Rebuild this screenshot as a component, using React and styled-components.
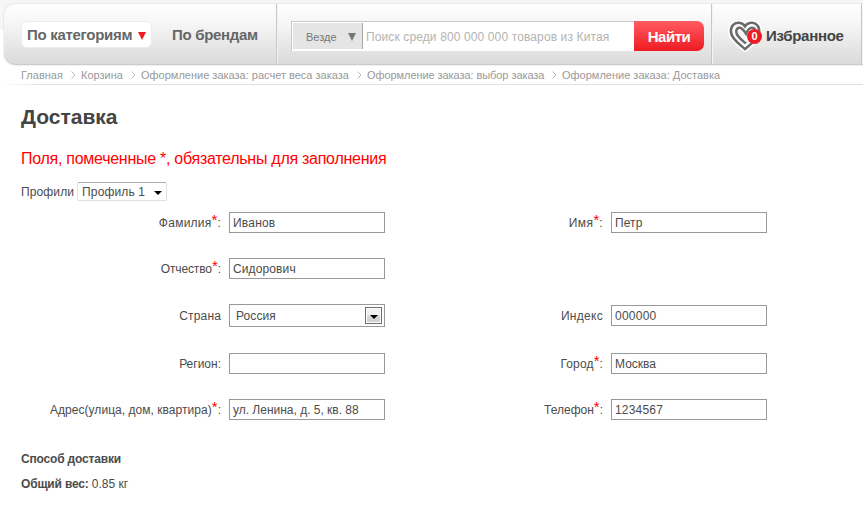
import React from "react";
import styled, { createGlobalStyle, css } from "styled-components";

const Global = createGlobalStyle`
  * { box-sizing: border-box; }
  body { margin: 0; background: #fff; color: #4b4b4b; overflow: hidden;
    font: 12px/16px "Liberation Sans", Arial, sans-serif; }
`;

const Page = styled.div`
  width: 863px;
  height: 506px;
  overflow: hidden;
  padding: 4px 0 0 4px;
  background: linear-gradient(#f6f6f6, #f6f6f6) 0 0 / 100% 30px no-repeat #fff;
`;

const Header = styled.header`
  display: flex;
  width: 859px;
  height: 61px;
  border-radius: 12px 0 0 12px;
  background: linear-gradient(#ffffff 0%, #f5f5f5 35%, #dadada 100%);
  border-bottom: 1px solid #cbcbcb;
  box-shadow: 0 0 2px rgba(0, 0, 0, 0.2);
`;

const HeaderCell = styled.div`
  display: flex;
  flex: none;
  width: ${(p) => p.$width}px;
  padding: ${(p) => p.$padding};
  border-right: 1px solid #c6c6c6;
  box-shadow: 1px 0 0 #f4f4f4;
`;

const navText = css`
  font-weight: bold;
  font-size: 15px;
  line-height: 26px;
  letter-spacing: -0.3px;
  color: #666;
  white-space: nowrap;
`;

const CategoryButton = styled.div`
  ${navText}
  display: flex;
  align-items: center;
  width: 131px;
  height: 27px;
  padding-left: 5px;
  border: 1px solid #ececec;
  border-radius: 6px;
  background: #fff;
`;

const NavLink = styled.div`
  ${navText}
  margin-left: 20px;
  padding-top: 1px;
`;

const RedArrow = styled.svg`
  display: block;
  width: 8px;
  height: 8px;
  margin: 2px 0 0 6px;
`;

const Search = styled.div`
  display: flex;
  width: 343px;
  height: 30px;
  background: #fff;
  border: solid #c9c9c9;
  border-width: 1px 0 0 1px;
`;

const Scope = styled.div`
  display: flex;
  align-items: center;
  width: 70px;
  height: 26px;
  margin: 1px 0 0 1px;
  padding: 1px 6px 0 13px;
  justify-content: space-between;
  background: #e5e5e5;
  border-right: 1px solid #a6a6a6;
  color: #777;
  font-size: 11px;
`;

const ScopeArrow = styled.svg`
  display: block;
  width: 8px;
  height: 8px;
`;

const Placeholder = styled.div`
  flex: 1;
  padding-left: 3px;
  line-height: 30px;
  color: #b3b3b3;
  font-size: 12px;
  letter-spacing: 0.12px;
  white-space: nowrap;
`;

const SearchButton = styled.div`
  width: 70px;
  height: 30px;
  border-radius: 0 7px 7px 0;
  background: linear-gradient(#ff5b61, #ee1b22);
  color: #fff;
  font-weight: bold;
  font-size: 15px;
  line-height: 32px;
  letter-spacing: -0.5px;
  text-align: center;
`;

const HeartBox = styled.div`
  position: relative;
  width: 36px;
  height: 34px;
  svg { display: block; }
`;

const Badge = styled.span`
  position: absolute;
  left: 19px;
  top: 10px;
  width: 15px;
  height: 15px;
  border-radius: 50%;
  background: #ed1c24;
  color: #fff;
  font: bold 11px/15px "Liberation Sans", Arial, sans-serif;
  text-align: center;
`;

const Favorites = styled.div`
  ${navText}
  color: #444;
  margin: 4px 0 0 2px;
`;

const Crumbs = styled.nav`
  display: flex;
  align-items: center;
  height: 20px;
  padding-left: 17px;
  color: #999;
  font-size: 11px;
  border-bottom: 1px solid;
  border-image: linear-gradient(90deg, #fff, #e0e0e0 40px) 1;
`;

const Crumb = styled.span`
  flex: none;
  width: ${(p) => p.$width}px;
  letter-spacing: ${(p) => p.$spacing || 0}px;
  white-space: nowrap;
`;

const Chevron = styled.svg`
  flex: none;
  width: 5px;
  height: 8px;
  margin: 1px 5px 0 0;
`;

const Content = styled.main`
  padding-left: 17px;
`;

const Title = styled.h1`
  margin: 20px 0 0;
  font-size: 21px;
  line-height: 24px;
  color: #444;
`;

const Notice = styled.p`
  margin: 20px 0 0;
  font-size: 16px;
  line-height: 20px;
  color: #f00;
  letter-spacing: -0.27px;
`;

const ProfileRow = styled.div`
  display: flex;
  align-items: center;
  height: 19px;
  margin-top: 13px;
  gap: 3px;
  letter-spacing: 0.12px;
`;

const ProfileSelect = styled.div`
  display: flex;
  align-items: center;
  justify-content: space-between;
  width: 90px;
  height: 19px;
  padding: 0 4px;
  border: 1px solid #dfe1e6;
  border-top-color: #abadb3;
  border-radius: 2px;
`;

const SelectArrow = styled.svg`
  display: block;
  width: 8px;
  height: 4px;
  margin-top: 2px;
`;

const Form = styled.div`
  display: grid;
  grid-template-columns: 200px 164px 218px 164px;
  grid-template-rows: 21px 21px 23px 23px 19px;
  row-gap: 25px;
  margin-top: 11px;
`;

const Label = styled.label`
  grid-column: ${(p) => p.$col};
  grid-row: ${(p) => p.$row};
  align-self: center;
  display: flex;
  justify-content: flex-end;
  height: 16px;
  line-height: 16px;
  white-space: nowrap;
  letter-spacing: ${(p) => p.$spacing || 0}px;
`;

const Star = styled.span`
  color: #f00;
  font-size: 15px;
  line-height: 16px;
  margin-top: -3px;
  letter-spacing: 0;
`;

const Field = styled.div`
  grid-column: ${(p) => p.$col};
  grid-row: ${(p) => p.$row};
  align-self: center;
  display: flex;
  align-items: center;
  justify-content: space-between;
  width: 156px;
  height: ${(p) => (p.$select ? 23 : 21)}px;
  margin-left: 8px;
  padding: ${(p) => (p.$select ? "0 2px 0 6px" : "0 3px")};
  border: 1px solid #999;
  background: #fff;
  letter-spacing: ${(p) => p.$spacing || 0}px;
`;

const DropButton = styled.span`
  display: flex;
  align-items: center;
  justify-content: center;
  width: 17px;
  height: 17px;
  border: 1px solid #707070;
  box-shadow: inset 0 0 0 1px #fcfcfc;
  background: linear-gradient(#f2f2f2 50%, #dadada 50%, #cfcfcf);
`;

const Summary = styled.p`
  margin: ${(p) => p.$top}px 0 0;
  letter-spacing: -0.18px;
`;

const Weight = styled.span`
  letter-spacing: 0;
`;

const crumbs = [
  ["Главная", 50, 0],
  ["Корзина", 50, 0],
  ["Оформление заказа: расчет веса заказа", 216, 0],
  ["Оформление заказа: выбор заказа", 185, -0.07],
  ["Оформление заказа: Доставка", 170, 0],
];

const fields = [
  { side: 0, row: 1, label: "Фамилия", star: true, value: "Иванов", ls: 0.25, vs: 0.2 },
  { side: 1, row: 1, label: "Имя", star: true, value: "Петр", ls: 0.4, vs: 0.1 },
  { side: 0, row: 2, label: "Отчество", star: true, value: "Сидорович", ls: -0.12, vs: 0.12 },
  { side: 0, row: 3, label: "Страна", value: "Россия", select: true, ls: 0.15, vs: 0.1 },
  { side: 1, row: 3, label: "Индекс", value: "000000", ls: 0.3, vs: 0.25 },
  { side: 0, row: 4, label: "Регион", colon: true, value: "" },
  { side: 1, row: 4, label: "Город", star: true, value: "Москва", ls: 0.15 },
  { side: 0, row: 5, label: "Адрес(улица, дом, квартира)", star: true, value: "ул. Ленина, д. 5, кв. 88", ls: 0.04, vs: -0.01 },
  { side: 1, row: 5, label: "Телефон", star: true, value: "1234567", vs: 0.2 },
];

const Arrow = () => (
  <SelectArrow viewBox="0 0 8 4"><path d="M0 0h8L4 4z" fill="#000" /></SelectArrow>
);

const HEART = "M16.5 30.5C12.5 26.5 3.2 20.5 2.5 12.5C2 6 5.5 2.6 9.8 2.6C12.8 2.6 15 4 16.5 6.4C18 4 20.4 2.6 23.4 2.6C27.4 2.6 31.2 6 30.6 12.5C29.9 20.5 20.5 26.5 16.5 30.5Z";
const INNER = "M17.5 24.5C13.5 21 8.2 17.5 7.8 12.5C7.5 9.2 9.3 7.8 11.1 7.8C14 7.8 15.4 11 17.5 14.2C19 10.5 20.8 7.8 23.4 7.8C25 7.8 26 8.5 26.6 10";

const Heart = () => (
  <svg width="35" height="35" viewBox="-1 0 35 35" fill="none">
    <g transform="translate(-0.5 1.4) scale(1 0.94)">
      <path d={HEART} stroke="#fff" strokeWidth="6" strokeLinejoin="round" fill="#f8f8f8" />
      <path d={HEART} stroke="#6b6b6b" strokeWidth="2.7" />
      <path d={INNER} stroke="#6b6b6b" strokeWidth="2.5" />
    </g>
  </svg>
);

export default function App() {
  return (
    <Page>
      <Global />
      <Header>
        <HeaderCell $width={273} $padding="17px 0 0 17px">
          <CategoryButton>
            По категориям
            <RedArrow viewBox="0 0 8 8"><path d="M0 0h8L4 8z" fill="#ed1c24" /></RedArrow>
          </CategoryButton>
          <NavLink>По брендам</NavLink>
        </HeaderCell>
        <HeaderCell $width={435} $padding="17px 0 0 14px">
          <Search>
            <Scope>
              Везде
              <ScopeArrow viewBox="0 0 8 8"><path d="M0 0h8L4 8z" fill="#777" /></ScopeArrow>
            </Scope>
            <Placeholder>Поиск среди 800 000 000 товаров из Китая</Placeholder>
          </Search>
          <SearchButton>Найти</SearchButton>
        </HeaderCell>
        <HeaderCell $width={150} $padding="15px 0 0 16px">
          <HeartBox><Heart /><Badge>0</Badge></HeartBox>
          <Favorites>Избранное</Favorites>
        </HeaderCell>
      </Header>
      <Crumbs>
        {crumbs.map(([text, width, spacing], i) => (
          <React.Fragment key={text}>
            {i > 0 && (
              <Chevron viewBox="0 0 5 8"><path d="M0.5 0.5L4 4L0.5 7.5" fill="none" stroke="#bbb" /></Chevron>
            )}
            <Crumb $width={width} $spacing={spacing}>{text}</Crumb>
          </React.Fragment>
        ))}
      </Crumbs>
      <Content>
        <Title>Доставка</Title>
        <Notice>Поля, помеченные *, обязательны для заполнения</Notice>
        <ProfileRow>
          Профили
          <ProfileSelect>Профиль 1<Arrow /></ProfileSelect>
        </ProfileRow>
        <Form>
          {fields.map((f) => (
            <React.Fragment key={f.label}>
              <Label $col={f.side * 2 + 1} $row={f.row} $spacing={f.ls}>
                {f.label}
                {f.star && <Star>*</Star>}
                {(f.star || f.colon) && ":"}
              </Label>
              <Field $col={f.side * 2 + 2} $row={f.row} $select={f.select} $spacing={f.vs}>
                {f.value}
                {f.select && <DropButton><Arrow /></DropButton>}
              </Field>
            </React.Fragment>
          ))}
        </Form>
        <Summary $top={32}><b>Способ доставки</b></Summary>
        <Summary $top={9}><b>Общий вес:</b> <Weight>0.85 кг</Weight></Summary>
      </Content>
    </Page>
  );
}
